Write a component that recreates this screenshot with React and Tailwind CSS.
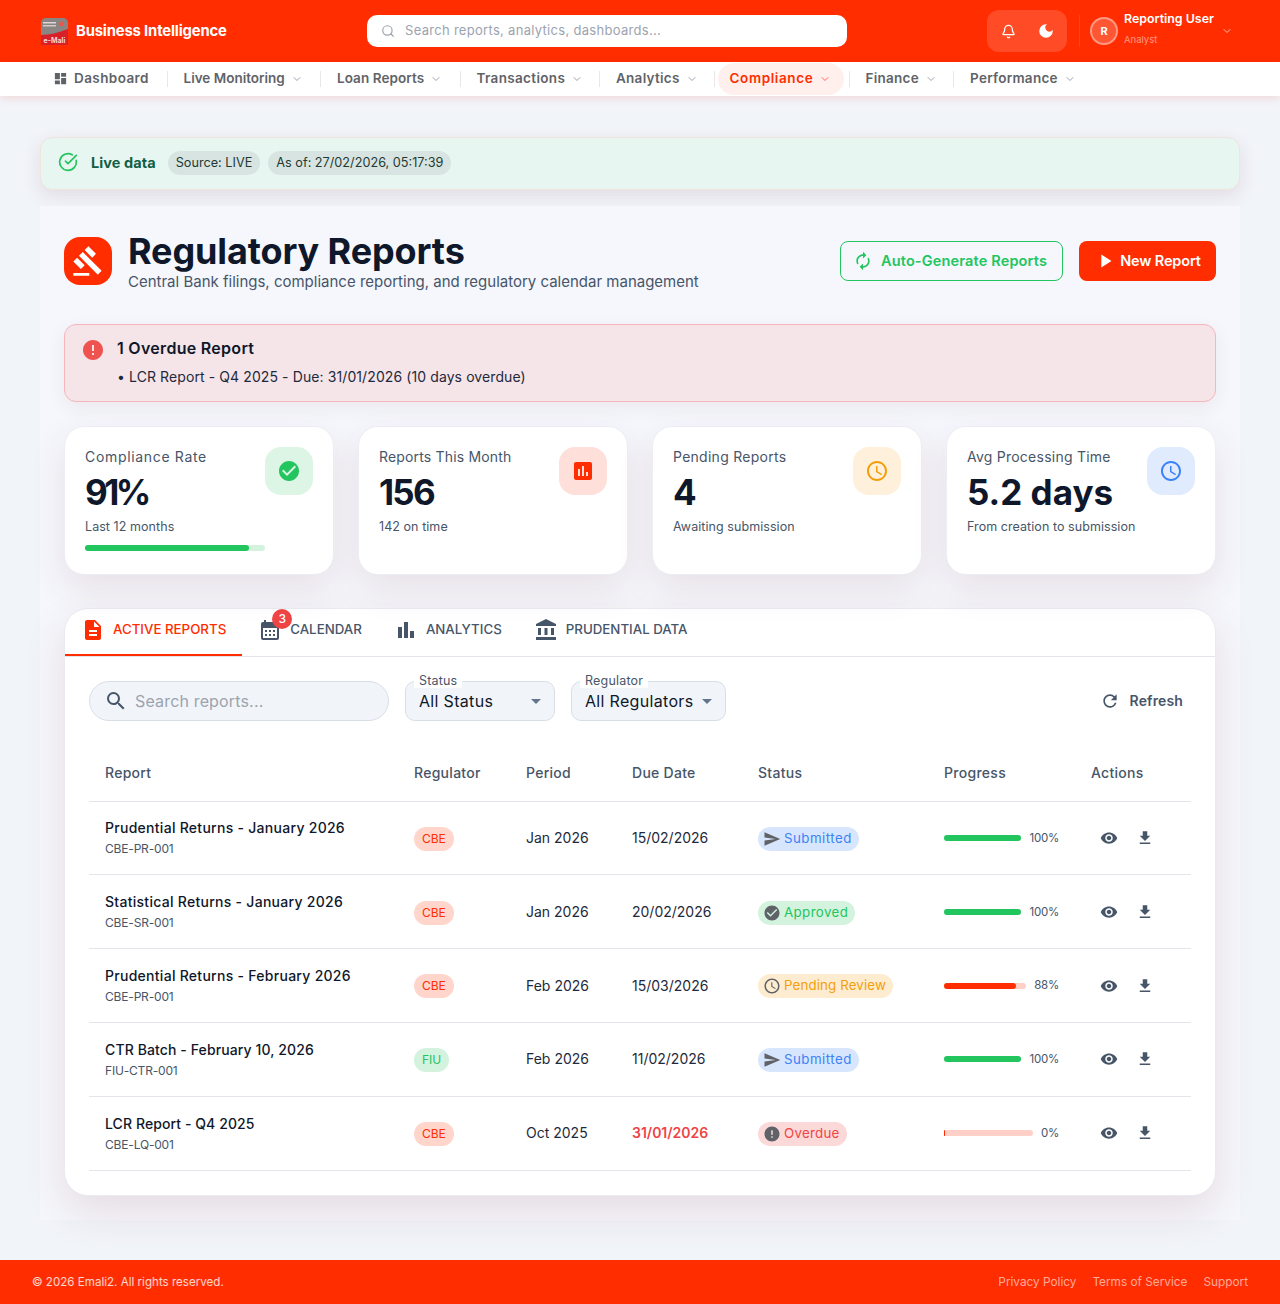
import { Bell, ChevronDown, CircleCheckBig, Search } from "lucide-react";
import {
  MdAccountBalance,
  MdArrowDropDown,
  MdAssessment,
  MdAutorenew,
  MdBarChart,
  MdCalendarMonth,
  MdCheckCircle,
  MdDarkMode,
  MdDashboard,
  MdDescription,
  MdError,
  MdFileDownload,
  MdGavel,
  MdOutlineAccessTime,
  MdPlayArrow,
  MdRefresh,
  MdSearch,
  MdSend,
  MdVisibility,
} from "react-icons/md";

const navItems = [
  { label: "Live Monitoring", width: "w-[152.5px]", track: "tracking-[0em]" },
  { label: "Loan Reports", width: "w-[138.5px]", track: "tracking-[0.005em]" },
  { label: "Transactions", width: "w-[138.5px]", track: "tracking-[0.025em]" },
  { label: "Analytics", width: "w-[113.5px]", track: "tracking-[0.02em]" },
  { label: "Compliance", width: "w-[126px]", track: "tracking-[0.045em]", active: true },
  { label: "Finance", width: "w-[103.5px]", track: "tracking-[0.02em]" },
  { label: "Performance", width: "w-[128px]", track: "tracking-[0.02em]" },
];

const stats = [
  { label: "Compliance Rate", labelTrack: "tracking-[0.048em]", value: "91%", valueTrack: "tracking-[-0.1em]", sub: "Last 12 months", box: "bg-[#dcf5e5]", icon: <MdCheckCircle size={24} className="text-[#22c55e]" />, bar: true },
  { label: "Reports This Month", labelTrack: "tracking-[0.012em]", value: "156", valueTrack: "tracking-[-0.05em]", sub: "142 on time", box: "bg-[#ffdfd9]", icon: <MdAssessment size={24} className="text-[#ff2d00]" /> },
  { label: "Pending Reports", labelTrack: "tracking-[0.019em]", value: "4", valueTrack: "tracking-[0em]", sub: "Awaiting submission", box: "bg-[#fef0da]", icon: <MdOutlineAccessTime size={24} className="text-[#f59e0b]" /> },
  { label: "Avg Processing Time", labelTrack: "tracking-[0.017em]", value: "5.2 days", valueTrack: "tracking-[0em]", sub: "From creation to submission", box: "bg-[#e0ebfe]", icon: <MdOutlineAccessTime size={24} className="text-[#3b82f6]" /> },
];

const statusStyles = {
  Submitted: { chip: "bg-[#d8e6fd] text-[#3b82f6] tracking-[0.035em]", icon: <MdSend size={18} /> },
  Approved: { chip: "bg-[#d3f3df] text-[#22c55e] tracking-[0.03em]", icon: <MdCheckCircle size={18} /> },
  "Pending Review": { chip: "bg-[#fdecd0] text-[#f59e0b] tracking-[0.01em]", icon: <MdOutlineAccessTime size={18} /> },
  Overdue: { chip: "bg-[#fcd9d9] text-[#ef4444] tracking-[0.02em]", icon: <MdError size={18} /> },
};

const rows = [
  { name: "Prudential Returns - January 2026", track: "tracking-[0.02em]", code: "CBE-PR-001", reg: "CBE", period: "Jan 2026", due: "15/02/2026", status: "Submitted", progress: 100 },
  { name: "Statistical Returns - January 2026", track: "tracking-[0.02em]", code: "CBE-SR-001", reg: "CBE", period: "Jan 2026", due: "20/02/2026", status: "Approved", progress: 100 },
  { name: "Prudential Returns - February 2026", track: "tracking-[0.02em]", code: "CBE-PR-001", reg: "CBE", period: "Feb 2026", due: "15/03/2026", status: "Pending Review", progress: 88 },
  { name: "CTR Batch - February 10, 2026", track: "tracking-[0.008em]", code: "FIU-CTR-001", reg: "FIU", period: "Feb 2026", due: "11/02/2026", status: "Submitted", progress: 100 },
  { name: "LCR Report - Q4 2025", track: "tracking-[0.006em]", code: "CBE-LQ-001", reg: "CBE", period: "Oct 2025", due: "31/01/2026", status: "Overdue", progress: 0, late: true },
];

function Logo() {
  return (
    <svg width="27" height="27" viewBox="0 0 27 27" className="shrink-0 ml-px mt-px">
      <rect width="27" height="27" rx="5" fill="#8a8583" />
      <rect x="2" y="4" width="13" height="1.5" fill="#ded6d4" />
      <rect x="2" y="7" width="13" height="1.5" fill="#d2cac8" />
      <circle cx="20.5" cy="6" r="2.4" fill="#e8584a" />
      <path d="M0 17 C9 17 19 14 27 11 V27 H0 Z" fill="#d8202a" />
      <text x="13.5" y="24.5" textAnchor="middle" fontSize="7" fontWeight="700" fill="#f9d5d5" fontFamily="Inter, sans-serif">e-Mali</text>
    </svg>
  );
}

function TopBar() {
  return (
    <header className="h-[62px] bg-[#ff2d00] flex items-center pl-[40px] pr-[46px] shrink-0">
      <div className="w-[327px] flex items-center gap-2">
        <Logo />
        <span className="text-white text-[14.8px] font-bold tracking-[-0.01em]">Business Intelligence</span>
      </div>
      <div className="w-[480px] h-8 bg-white rounded-[10px] flex items-center px-3.5 gap-2.5">
        <Search size={14} className="text-[#9ca3af]" />
        <span className="text-[#9ca3af] text-[13px] tracking-[0.023em]">Search reports, analytics, dashboards...</span>
      </div>
      <div className="ml-[140px] w-20 h-[42px] bg-white/15 rounded-xl flex items-center justify-between pl-3.5 pr-3">
        <Bell size={15} className="text-white" />
        <MdDarkMode size={18} className="text-white" />
      </div>
      <div className="w-px h-8 bg-white/10 ml-3" />
      <div className="ml-[10px] w-7 h-7 rounded-full border-2 border-white/40 bg-white/20 flex items-center justify-center text-white text-[11px] font-bold">R</div>
      <div className="ml-1.5 w-[94px] flex flex-col gap-[7px] -mt-[5px]">
        <span className="text-white text-[12.4px] font-semibold leading-4">Reporting User</span>
        <span className="text-white/50 text-[9.5px] leading-3">Analyst</span>
      </div>
      <ChevronDown size={12} className="text-white/70 ml-[3px]" />
    </header>
  );
}

function NavBar() {
  return (
    <nav className="h-[34px] bg-white shadow-[0_2px_8px_rgba(255,45,0,0.14)] flex items-center pl-[53px] shrink-0 relative">
      <div className="w-[113.5px] flex items-center gap-1.5 text-[#5f6368] text-[13.5px] font-semibold tracking-[0.03em] pb-px">
        <MdDashboard size={15} />
        <span>Dashboard</span>
      </div>
      {navItems.map((item) => (
        <div key={item.label} className="flex items-center">
          <div className="w-px h-4 bg-[#e8e8e8]" />
          <div className={`${item.width} ${item.track} h-[32px] flex items-center gap-[6px] text-[13.5px] font-semibold pb-px ${item.active ? "text-[#ff2d00] bg-[#fff0ed] rounded-2xl pl-3 ml-[3px] mr-[5px]" : "text-[#5f6368] pl-4"}`}>
            <span className="whitespace-nowrap">{item.label}</span>
            <ChevronDown size={12} className={item.active ? "text-[#ff6a4d]" : "text-[#9ca3af]"} />
          </div>
        </div>
      ))}
    </nav>
  );
}

function StatCard({ stat }) {
  return (
    <div className="h-[149px] bg-white rounded-[20px] border border-[#eceef3] shadow-[0_14px_36px_rgba(130,50,60,0.11)] p-5 flex justify-between">
      <div className="flex flex-col">
        <span className={`text-[#475569] text-sm leading-5 whitespace-nowrap ${stat.labelTrack}`}>{stat.label}</span>
        <span className={`text-[#0f172a] text-[35px] font-bold leading-[46px] mt-[2px] whitespace-nowrap ${stat.valueTrack}`}>{stat.value}</span>
        <span className="text-[#475569] text-[12.5px] leading-[18px] mt-[3px] tracking-[0.005em] whitespace-nowrap">{stat.sub}</span>
        {stat.bar && (
          <div className="w-[180px] h-1.5 rounded-full bg-[#d3f3df] mt-[9px]">
            <div className="w-[91%] h-full rounded-full bg-[#22c55e]" />
          </div>
        )}
      </div>
      <div className={`w-12 h-12 rounded-2xl flex items-center justify-center shrink-0 ${stat.box}`}>{stat.icon}</div>
    </div>
  );
}

function Tab({ icon, label, active, badge }) {
  return (
    <div className={`relative h-[47px] flex items-center gap-2 px-4 pb-1 text-[13.3px] font-medium whitespace-nowrap border-b-2 ${active ? "text-[#ff2d00] border-[#ff2d00]" : "text-[#475569] border-transparent"}`}>
      {icon}
      <span>{label}</span>
      {badge && (
        <span className="absolute left-[30px] top-0 w-5 h-5 rounded-full bg-[#ef4444] text-white text-xs flex items-center justify-center">{badge}</span>
      )}
    </div>
  );
}

function Select({ label, value, width }) {
  return (
    <div className={`relative h-10 ${width} rounded-[10px] bg-[#f1f5f9] border border-[#d8dee8] flex items-center justify-between pl-[13px] pr-[6px]`}>
      <span className="absolute left-2 -top-[8px] px-[5px] bg-white text-[#475569] text-[12.5px] tracking-[0.015em] leading-[14px]">{label}</span>
      <span className="text-[#0f172a] text-base tracking-[0.02em] whitespace-nowrap pb-px">{value}</span>
      <MdArrowDropDown size={24} className="text-[#64748b] shrink-0" />
    </div>
  );
}

function Progress({ value }) {
  const done = value === 100;
  return (
    <div className="w-[115px] flex items-center gap-2">
      <div className={`flex-1 h-1.5 rounded-full ${done ? "bg-[#d3f3df]" : "bg-[#ffd0c7]"}`}>
        <div className={`h-full rounded-full ${done ? "bg-[#22c55e]" : "bg-[#ff2d00]"}`} style={{ width: `${value === 0 ? 1 : value}%` }} />
      </div>
      <span className="text-[#475569] text-[11.5px] tracking-[-0.02em] pt-px">{value}%</span>
    </div>
  );
}

function ReportRow({ row }) {
  const status = statusStyles[row.status];
  return (
    <tr className="h-[73.85px] border-b border-[#e2e5ea]">
      <td className="pl-4">
        <div className={`text-[#0f172a] text-sm font-medium leading-[21px] ${row.track}`}>{row.name}</div>
        <div className="text-[#475569] text-xs leading-[18px] mt-[2px] tracking-[-0.015em]">{row.code}</div>
      </td>
      <td className="pl-4">
        <span className={`inline-flex items-center align-middle h-6 px-2 rounded-full text-xs ${row.reg === "FIU" ? "bg-[#d3f3df] text-[#22c55e]" : "bg-[#ffd5cc] text-[#ff2d00]"}`}>{row.reg}</span>
      </td>
      <td className="pl-4 text-sm text-[#1e293b]">{row.period}</td>
      <td className={`pl-4 text-sm ${row.late ? "text-[#ef4444] font-semibold" : "text-[#1e293b]"}`}>{row.due}</td>
      <td className="pl-4">
        <span className={`inline-flex items-center align-middle h-6 pl-[5px] pr-[7px] gap-[3px] rounded-full text-[13.3px] ${status.chip}`}>
          <span className="text-[#5f6368]">{status.icon}</span>
          {row.status}
        </span>
      </td>
      <td className="pl-4">
        <Progress value={row.progress} />
      </td>
      <td className="pl-4">
        <div className="flex text-[#475569]">
          <span className="w-9 h-9 flex items-center justify-center"><MdVisibility size={18} /></span>
          <span className="w-9 h-9 flex items-center justify-center"><MdFileDownload size={18} /></span>
        </div>
      </td>
    </tr>
  );
}

export default function App() {
  return (
    <div className="min-h-screen flex flex-col bg-[#f1f4f9] font-['Inter','Liberation_Sans',sans-serif]">
      <TopBar />
      <NavBar />

      <main className="px-10 pt-[41px]">
        <div className="h-[53px] rounded-xl bg-[#e8f6f1] border border-[#f0e4dc] shadow-[0_6px_18px_rgba(120,60,70,0.12)] flex items-center pl-[17px] text-[12.7px] pb-px">
          <CircleCheckBig size={20} className="text-[#22c55e] -mt-[3px]" />
          <span className="ml-[13px] text-[#115e45] font-bold text-[14.5px] tracking-[0.005em]">Live data</span>
          <span className="ml-3 h-6 px-2 rounded-full bg-[#d8e4e1] text-[#1f3a33] flex items-center">Source: LIVE</span>
          <span className="ml-2 h-6 px-2 rounded-full bg-[#d8e4e1] text-[#1f3a33] flex items-center">As of: 27/02/2026, 05:17:39</span>
        </div>

        <section className="mt-4 bg-[#f5f7fc] px-6 pt-[31px] pb-6">
          <div className="flex items-center justify-between h-12">
            <div className="flex items-center gap-4">
              <div className="w-12 h-12 rounded-2xl bg-[#ff2d00] flex items-center justify-center">
                <MdGavel size={32} className="text-white" />
              </div>
              <div className="mt-1">
                <h1 className="text-[#0f172a] text-4xl font-bold leading-9 tracking-[-0.003em]">Regulatory Reports</h1>
                <p className="text-[#475569] text-[15px] leading-[22px] mt-[2px]">Central Bank filings, compliance reporting, and regulatory calendar management</p>
              </div>
            </div>
            <div className="flex items-center gap-4">
              <div className="w-[223px] h-10 rounded-lg border border-[#22c55e] flex items-center pl-3 gap-2 text-[#22c55e] text-[14.5px] tracking-[0.011em] font-semibold">
                <MdAutorenew size={20} />
                <span>Auto-Generate Reports</span>
              </div>
              <div className="w-[137px] h-10 rounded-lg bg-[#ff2d00] flex items-center justify-center gap-1 text-white text-[14.5px] tracking-[-0.01em] font-semibold">
                <MdPlayArrow size={22} />
                <span>New Report</span>
              </div>
            </div>
          </div>

          <div className="mt-[39px] h-[78px] rounded-xl bg-[#f5e4e8] border border-[#f6b6bc] shadow-[0_6px_18px_rgba(120,60,70,0.08)] flex pl-4 pt-[13px] gap-3">
            <MdError size={24} className="text-[#ef5350]" />
            <div>
              <div className="text-[#0f172a] text-base font-semibold leading-5 tracking-[0.018em]">1 Overdue Report</div>
              <div className="text-[#1e293b] text-sm leading-5 mt-[9px] tracking-[0.007em]">• LCR Report - Q4 2025 - Due: 31/01/2026 (10 days overdue)</div>
            </div>
          </div>

          <div className="mt-6 grid grid-cols-4 gap-6">
            {stats.map((stat) => (
              <StatCard key={stat.label} stat={stat} />
            ))}
          </div>

          <div className="mt-[33px] bg-white rounded-3xl border border-[#e9ebf0] shadow-[0_16px_40px_rgba(130,50,60,0.13)] overflow-hidden pb-6">
            <div className="flex border-b border-[#e2e5ea]">
              <Tab active label="ACTIVE REPORTS" icon={<MdDescription size={24} />} />
              <Tab label="CALENDAR" badge="3" icon={<MdCalendarMonth size={24} />} />
              <Tab label="ANALYTICS" icon={<MdBarChart size={24} />} />
              <Tab label="PRUDENTIAL DATA" icon={<MdAccountBalance size={24} />} />
            </div>

            <div className="flex items-center gap-4 pl-6 pr-8 pt-6">
              <div className="w-[300px] h-10 rounded-full bg-[#f1f5f9] border border-[#d8dee8] flex items-center pl-[14px] gap-[7px]">
                <MdSearch size={24} className="text-[#475569]" />
                <span className="text-[#9ca3af] text-base tracking-[0.01em] pb-px">Search reports...</span>
              </div>
              <Select label="Status" value="All Status" width="w-[150px]" />
              <Select label="Regulator" value="All Regulators" width="w-[155px]" />
              <div className="ml-auto flex items-center gap-2.5 text-[#475569] text-sm tracking-[0.01em] font-semibold pb-px">
                <MdRefresh size={20} />
                <span>Refresh</span>
              </div>
            </div>

            <div className="px-6 mt-6">
              <table className="w-[1102px] table-fixed border-collapse">
                <colgroup>
                  <col className="w-[309px]" />
                  <col className="w-[112px]" />
                  <col className="w-[106px]" />
                  <col className="w-[126px]" />
                  <col className="w-[186px]" />
                  <col className="w-[147px]" />
                  <col className="w-[116px]" />
                </colgroup>
                <thead>
                  <tr className="h-[56px] border-b border-[#e2e5ea] text-left text-[#475569] text-sm tracking-[0.02em]">
                    <th className="pl-4 font-medium">Report</th>
                    <th className="pl-4 font-medium">Regulator</th>
                    <th className="pl-4 font-medium">Period</th>
                    <th className="pl-4 font-medium">Due Date</th>
                    <th className="pl-4 font-medium">Status</th>
                    <th className="pl-4 font-medium">Progress</th>
                    <th className="pl-4 font-medium">Actions</th>
                  </tr>
                </thead>
                <tbody>
                  {rows.map((row) => (
                    <ReportRow key={row.name} row={row} />
                  ))}
                </tbody>
              </table>
            </div>
          </div>
        </section>
      </main>

      <footer className="mt-auto h-11 bg-[#ff2d00] flex items-center justify-between px-8 text-[11.6px] pt-px shrink-0">
        <span className="text-white/80">© 2026 Emali2. All rights reserved.</span>
        <div className="flex gap-4 text-white/60 text-[11.8px]">
          <span>Privacy Policy</span>
          <span>Terms of Service</span>
          <span>Support</span>
        </div>
      </footer>
    </div>
  );
}
